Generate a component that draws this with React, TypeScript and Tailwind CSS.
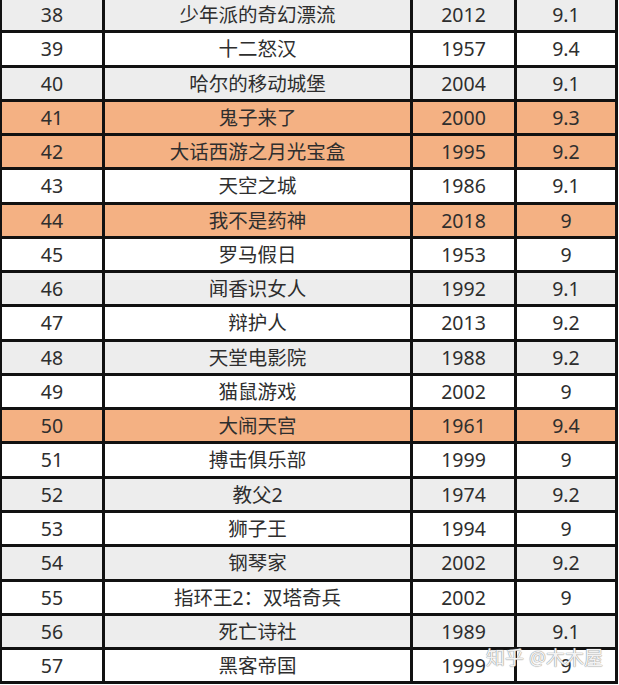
import React from 'react';

type Movie = { rank: number; title: string; year: number; score: string; hot?: boolean };

const movies: Movie[] = [
  { rank: 38, title: '少年派的奇幻漂流', year: 2012, score: '9.1' },
  { rank: 39, title: '十二怒汉', year: 1957, score: '9.4' },
  { rank: 40, title: '哈尔的移动城堡', year: 2004, score: '9.1' },
  { rank: 41, title: '鬼子来了', year: 2000, score: '9.3', hot: true },
  { rank: 42, title: '大话西游之月光宝盒', year: 1995, score: '9.2', hot: true },
  { rank: 43, title: '天空之城', year: 1986, score: '9.1' },
  { rank: 44, title: '我不是药神', year: 2018, score: '9', hot: true },
  { rank: 45, title: '罗马假日', year: 1953, score: '9' },
  { rank: 46, title: '闻香识女人', year: 1992, score: '9.1' },
  { rank: 47, title: '辩护人', year: 2013, score: '9.2' },
  { rank: 48, title: '天堂电影院', year: 1988, score: '9.2' },
  { rank: 49, title: '猫鼠游戏', year: 2002, score: '9' },
  { rank: 50, title: '大闹天宫', year: 1961, score: '9.4', hot: true },
  { rank: 51, title: '搏击俱乐部', year: 1999, score: '9' },
  { rank: 52, title: '教父2', year: 1974, score: '9.2' },
  { rank: 53, title: '狮子王', year: 1994, score: '9' },
  { rank: 54, title: '钢琴家', year: 2002, score: '9.2' },
  { rank: 55, title: '指环王2：双塔奇兵', year: 2002, score: '9' },
  { rank: 56, title: '死亡诗社', year: 1989, score: '9.1' },
  { rank: 57, title: '黑客帝国', year: 1999, score: '9' },
];

const cell = 'flex items-center justify-center border-r-[3px] border-[#111]';

export default function App() {
  return (
    <div
      className="relative h-[685px] w-[619px] overflow-hidden bg-white text-[19.5px] text-[#2e2e2e]"
      style={{ fontFamily: '"Noto Sans", "Noto Sans CJK SC", sans-serif' }}
    >
      <div className="-mt-[1px] w-[618px] border-l-2 border-[#111]">
        {movies.map((m) => {
          const bg = m.hot ? 'bg-[#f4b183]' : m.rank % 2 === 0 ? 'bg-[#ededed]' : 'bg-white';
          return (
            <div key={m.rank} className={`flex h-[34.28px] border-b-[3px] border-[#111] ${bg}`}>
              <div className={`${cell} w-[103px]`}>{m.rank}</div>
              <div className={`${cell} w-[308px]`}>{m.title}</div>
              <div className={`${cell} w-[104px]`}>{m.year}</div>
              <div className={`${cell} w-[101px]`}>{m.score}</div>
            </div>
          );
        })}
      </div>

      {/* watermark */}
      <div
        className="absolute right-[16px] bottom-[17px] text-[19px] leading-none text-white/90"
        style={{ textShadow: '0 0 1px #888, 0 0 1px #888' }}
      >
        知乎 @木木屋
      </div>
    </div>
  );
}
